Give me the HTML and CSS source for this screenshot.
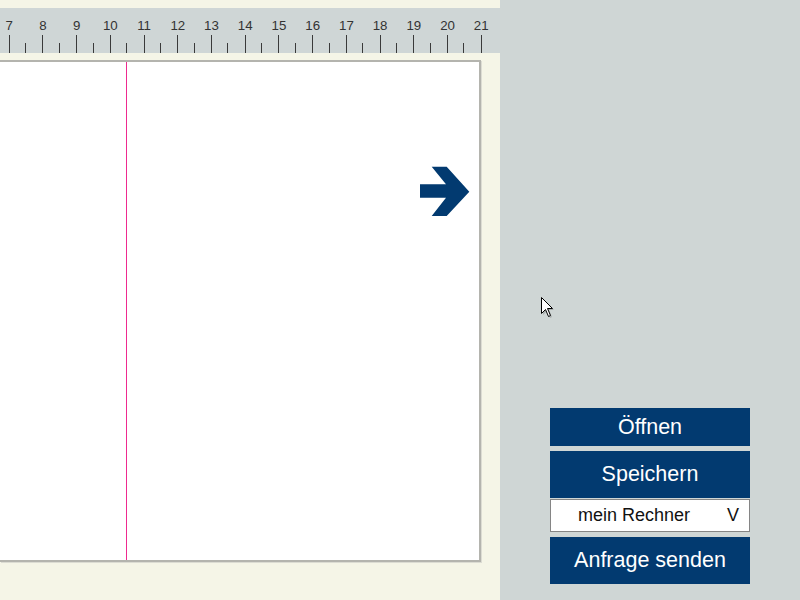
FILE: index.html
```html
<!DOCTYPE html>
<html lang="de">
<head>
<meta charset="utf-8">
<title>Editor</title>
<link rel="stylesheet" href="styles.css">
</head>
<body>
<div class="app">
  <div class="workspace">
    <div class="ruler">
      <div class="cm"><span class="num">7</span><div class="ticks"><i class="major"></i><i class="minor"></i></div></div>
      <div class="cm"><span class="num">8</span><div class="ticks"><i class="major"></i><i class="minor"></i></div></div>
      <div class="cm"><span class="num">9</span><div class="ticks"><i class="major"></i><i class="minor"></i></div></div>
      <div class="cm"><span class="num">10</span><div class="ticks"><i class="major"></i><i class="minor"></i></div></div>
      <div class="cm"><span class="num">11</span><div class="ticks"><i class="major"></i><i class="minor"></i></div></div>
      <div class="cm"><span class="num">12</span><div class="ticks"><i class="major"></i><i class="minor"></i></div></div>
      <div class="cm"><span class="num">13</span><div class="ticks"><i class="major"></i><i class="minor"></i></div></div>
      <div class="cm"><span class="num">14</span><div class="ticks"><i class="major"></i><i class="minor"></i></div></div>
      <div class="cm"><span class="num">15</span><div class="ticks"><i class="major"></i><i class="minor"></i></div></div>
      <div class="cm"><span class="num">16</span><div class="ticks"><i class="major"></i><i class="minor"></i></div></div>
      <div class="cm"><span class="num">17</span><div class="ticks"><i class="major"></i><i class="minor"></i></div></div>
      <div class="cm"><span class="num">18</span><div class="ticks"><i class="major"></i><i class="minor"></i></div></div>
      <div class="cm"><span class="num">19</span><div class="ticks"><i class="major"></i><i class="minor"></i></div></div>
      <div class="cm"><span class="num">20</span><div class="ticks"><i class="major"></i><i class="minor"></i></div></div>
      <div class="cm"><span class="num">21</span><div class="ticks"><i class="major"></i></div></div>
    </div>
    <div class="page">
      <div class="fold"></div>
      <svg class="next" width="50" height="51" viewBox="0 0 50 51" aria-label="weiter">
        <polygon points="0,18.3 26,18.3 11.7,0.7 26.7,0.7 49.3,25.7 26.7,50 11.7,50 26,31.7 0,31.7" fill="#023a70"/>
      </svg>
    </div>
  </div>
  <div class="panel">
    <button class="btn btn-open">Öffnen</button>
    <button class="btn btn-save">Speichern</button>
    <div class="select"><span>mein Rechner</span><span>V</span></div>
    <button class="btn btn-send">Anfrage senden</button>
  </div>
</div>
<svg class="cursor" width="16" height="22" viewBox="0 0 16 22">
  <polygon points="2,2 2,18 6,14 9,21 11,20 8,13 13,13" fill="rgba(0,0,0,0.18)"/>
  <polygon points="0.5,0.5 0.5,16.5 4.5,12.5 7.5,19.5 9.5,18.5 6.5,11.5 11.5,11.5" fill="#fff" stroke="#000" stroke-width="1"/>
</svg>
</body>
</html>
```
FILE: styles.css
```css
html, body {
  margin: 0;
  padding: 0;
  width: 800px;
  height: 600px;
  overflow: hidden;
  font-family: "Liberation Sans", Arial, sans-serif;
}

.app {
  display: flex;
  width: 800px;
  height: 600px;
}

.workspace {
  width: 500px;
  flex: none;
  background: #f5f5e7;
  padding-top: 8px;
  box-sizing: border-box;
  overflow: hidden;
}

.ruler {
  height: 45px;
  background: #cfd6d6;
  display: flex;
  padding-left: 0;
}

.cm {
  width: 33.72px;
  flex: none;
  display: flex;
  flex-direction: column;
  align-items: center;
}

.cm:first-child {
  margin-left: -7.66px;
}

.num {
  height: 27px;
  box-sizing: border-box;
  padding-top: 10px;
  line-height: 15px;
  font-size: 13.3px;
  color: #333;
}

.ticks {
  width: 100%;
  height: 18px;
  display: grid;
  grid-template-columns: 1fr 1px 1fr;
  align-items: end;
}

.major {
  grid-column: 2;
  height: 18px;
  width: 1px;
  background: #3a3a3a;
}

.minor {
  grid-column: 3;
  justify-self: end;
  height: 10px;
  width: 1px;
  background: #3a3a3a;
}

.page {
  position: relative;
  margin-top: 7px;
  width: 481px;
  height: 502px;
  box-sizing: border-box;
  background: #fff;
  border-top: 2px solid #b4b4ae;
  border-right: 2px solid #b4b4ae;
  border-bottom: 2px solid #b4b4ae;
  box-shadow: 1px 1px 0 #dcdcd3;
}

.fold {
  position: absolute;
  left: 126px;
  top: 0;
  bottom: 0;
  width: 1px;
  background: #ee2a8f;
}

.next {
  position: absolute;
  left: 420px;
  top: 104px;
  display: block;
}

.panel {
  flex: 1;
  background: #cfd6d5;
  display: flex;
  flex-direction: column;
  justify-content: flex-end;
  padding: 0 50px 16px;
}

.btn {
  display: block;
  width: 200px;
  border: 0;
  margin: 0;
  padding: 0;
  background: #023a70;
  color: #fff;
  font-family: "Liberation Sans", Arial, sans-serif;
  font-size: 21.5px;
  text-align: center;
}

.btn-open {
  height: 38px;
  margin-bottom: 5px;
}

.btn-save {
  height: 47px;
  margin-bottom: 1px;
}

.btn-send {
  height: 47px;
  margin-top: 5px;
}

.select {
  height: 33px;
  box-sizing: border-box;
  background: #fff;
  border: 1px solid #858585;
  display: flex;
  align-items: center;
  justify-content: space-between;
  padding: 0 10px 0 27px;
  font-size: 18px;
  color: #111;
}

.cursor {
  position: absolute;
  left: 541px;
  top: 297px;
  display: block;
}
```
